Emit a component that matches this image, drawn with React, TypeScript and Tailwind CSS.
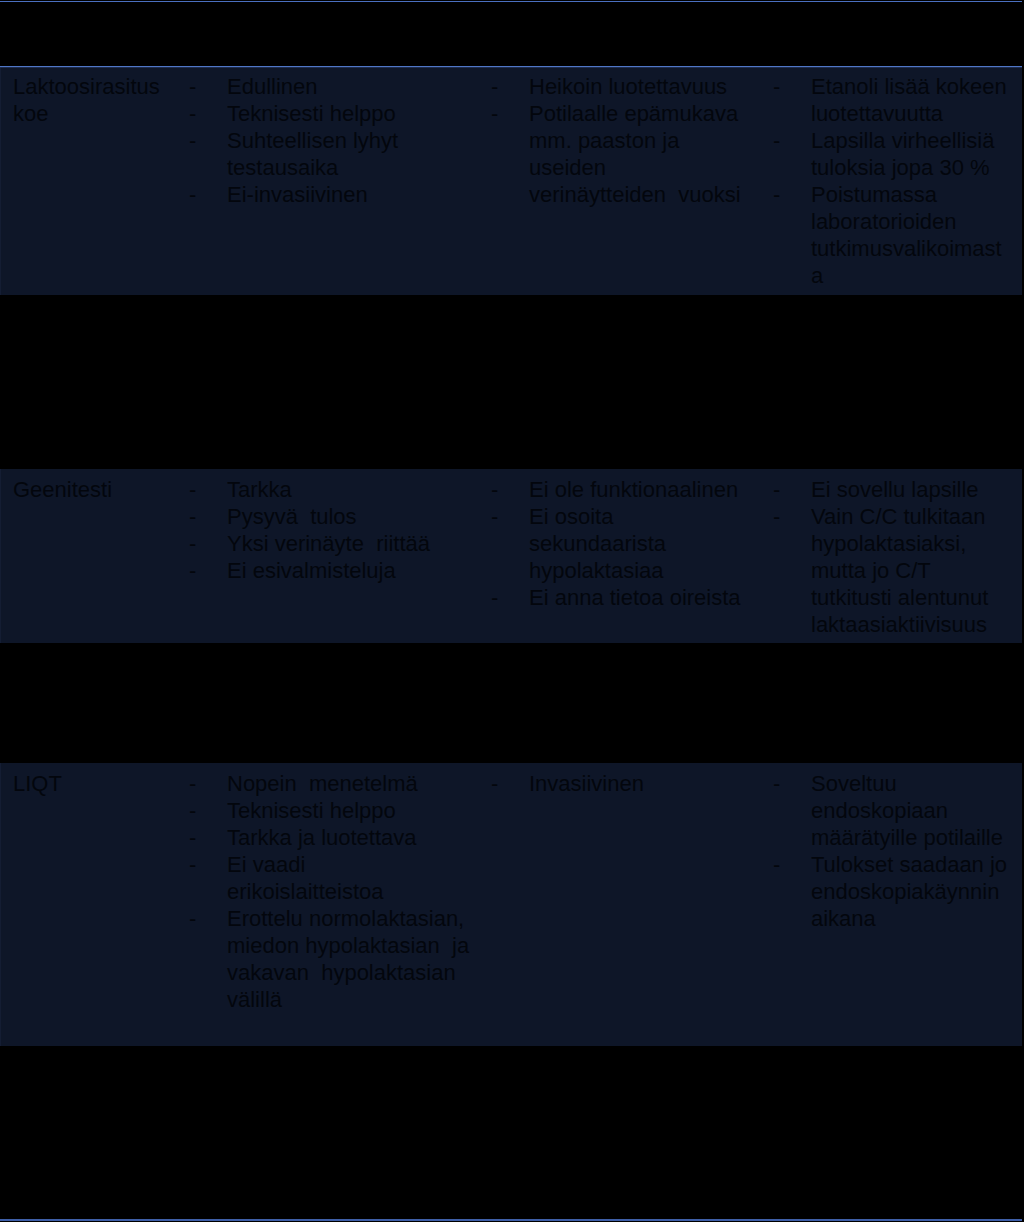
import React from "react";

type Bullet = string[];
type Row = {
  name: string[];
  pros: Bullet[];
  cons: Bullet[];
  notes: Bullet[];
  height: string;
  pt: string;
};

const rows: Row[] = [
  {
    name: ["Laktoosirasitus", "koe"],
    pros: [["Edullinen"], ["Teknisesti helppo"], ["Suhteellisen lyhyt", "testausaika"], ["Ei-invasiivinen"]],
    cons: [["Heikoin luotettavuus"], ["Potilaalle epämukava", "mm. paaston ja", "useiden", "verinäytteiden  vuoksi"]],
    notes: [
      ["Etanoli lisää kokeen", "luotettavuutta"],
      ["Lapsilla virheellisiä", "tuloksia jopa 30 %"],
      ["Poistumassa", "laboratorioiden", "tutkimusvalikoimast", "a"],
    ],
    height: "h-[227px]",
    pt: "pt-[5px]",
  },
  {
    name: ["Geenitesti"],
    pros: [["Tarkka"], ["Pysyvä  tulos"], ["Yksi verinäyte  riittää"], ["Ei esivalmisteluja"]],
    cons: [["Ei ole funktionaalinen"], ["Ei osoita", "sekundaarista", "hypolaktasiaa"], ["Ei anna tietoa oireista"]],
    notes: [
      ["Ei sovellu lapsille"],
      ["Vain C/C tulkitaan", "hypolaktasiaksi,", "mutta jo C/T", "tutkitusti alentunut", "laktaasiaktiivisuus"],
    ],
    height: "h-[174px]",
    pt: "pt-[7px]",
  },
  {
    name: ["LIQT"],
    pros: [
      ["Nopein  menetelmä"],
      ["Teknisesti helppo"],
      ["Tarkka ja luotettava"],
      ["Ei vaadi", "erikoislaitteistoa"],
      ["Erottelu normolaktasian,", "miedon hypolaktasian  ja", "vakavan  hypolaktasian", "välillä"],
    ],
    cons: [["Invasiivinen"]],
    notes: [
      ["Soveltuu", "endoskopiaan", "määrätyille potilaille"],
      ["Tulokset saadaan jo", "endoskopiakäynnin", "aikana"],
    ],
    height: "h-[283px]",
    pt: "pt-[7px]",
  },
];

function BulletList({ items }: { items: Bullet[] }) {
  return (
    <div className="flex flex-col pl-[10px]">
      {items.map((b, i) => (
        <div key={i} className="flex">
          <div className="w-[38px] shrink-0">-</div>
          <div className="whitespace-pre">
            {b.map((l, j) => (
              <div key={j}>{l}</div>
            ))}
          </div>
        </div>
      ))}
    </div>
  );
}

function TableRow({ row }: { row: Row }) {
  return (
    <div
      className={`grid grid-cols-[178px_302px_282px_1fr] bg-[#0e1628] ${row.height} ${row.pt} mr-[2px] border-l border-[#141d33]`}
    >
      <div className="pl-[12px]">
        {row.name.map((l, i) => (
          <div key={i}>{l}</div>
        ))}
      </div>
      <BulletList items={row.pros} />
      <BulletList items={row.cons} />
      <BulletList items={row.notes} />
    </div>
  );
}

export default function App() {
  return (
    <div
      className="w-[1024px] h-[1222px] bg-black text-[#03060d] text-[22px] leading-[27px] overflow-hidden"
      style={{ fontFamily: '"Liberation Sans", Arial, sans-serif' }}
    >
      <div className="h-[1px]" />
      <div className="h-[1px] bg-[#4a6fbf] mr-[2px]" />
      <div className="h-[64px]" />
      <div className="h-[1px] bg-[#4f76c6] mr-[2px]" />
      <div className="h-[1px] bg-[#1e2c4e] mr-[2px]" />
      <TableRow row={rows[0]} />
      <div className="h-[174px]" />
      <TableRow row={rows[1]} />
      <div className="h-[120px]" />
      <TableRow row={rows[2]} />
      <div className="h-[173px]" />
      <div className="h-[2px] bg-[#3e5fa8] mr-[2px]" />
    </div>
  );
}
